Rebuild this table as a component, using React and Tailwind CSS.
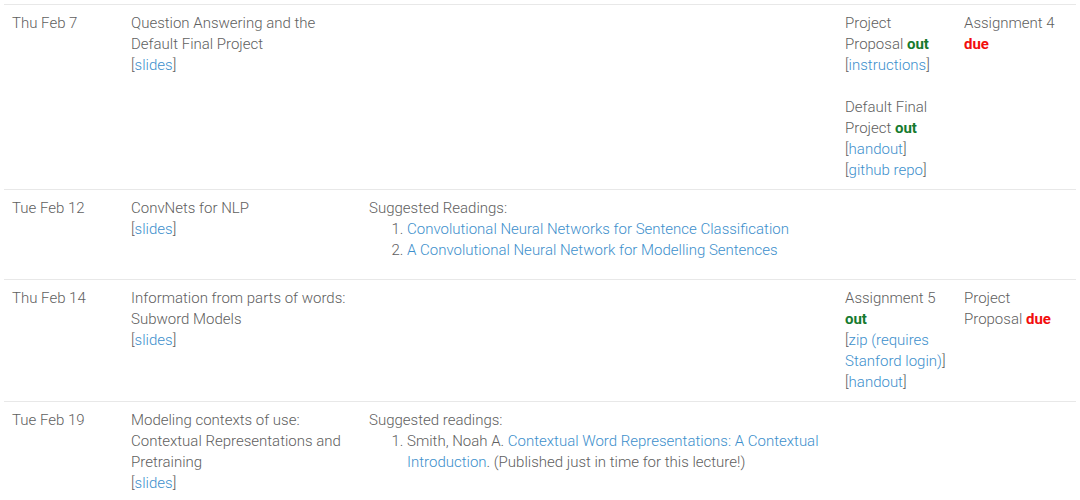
import React from "react";

const A = ({ children }) => <a className="text-[#3d8fcc]">{children}</a>;
const Br = ({ children }) => (
  <>
    [<A>{children}</A>]
  </>
);
const Out = () => <b className="font-bold text-[#167a2e]">out</b>;
const Due = () => <b className="font-bold text-[#f20d0d]">due</b>;

const td = "align-top p-2 border-t border-[#e8e8e8]";

export default function App() {
  return (
    <div className="bg-white w-[1080px] h-[500px] overflow-hidden pt-1 px-1 text-[15px] leading-[21px] font-light text-[#606060]" style={{ fontFamily: "Roboto, 'Liberation Sans', sans-serif" }}>
      <table className="w-[1072px] table-fixed border-collapse">
        <colgroup>
          <col className="w-[119px]" />
          <col className="w-[238px]" />
          <col className="w-[476px]" />
          <col className="w-[119px]" />
          <col className="w-[120px]" />
        </colgroup>
        <tbody>
          <tr>
            <td className={td}>Thu Feb 7</td>
            <td className={td}>
              Question Answering and the Default Final Project
              <br />
              <Br>slides</Br>
            </td>
            <td className={td}></td>
            <td className={td}>
              Project Proposal <Out />
              <br />
              <Br>instructions</Br>
              <br />
              <br />
              Default Final Project <Out />
              <br />
              <Br>handout</Br>
              <br />
              <Br>github repo</Br>
            </td>
            <td className={td}>
              Assignment 4 <Due />
            </td>
          </tr>
          <tr>
            <td className={td}>Tue Feb 12</td>
            <td className={td}>
              ConvNets for NLP
              <br />
              <Br>slides</Br>
            </td>
            <td className={td}>
              Suggested Readings:
              <ol className="list-decimal pl-[38px] mb-[10px]">
                <li>
                  <A>Convolutional Neural Networks for Sentence Classification</A>
                </li>
                <li>
                  <A>A Convolutional Neural Network for Modelling Sentences</A>
                </li>
              </ol>
            </td>
            <td className={td}></td>
            <td className={td}></td>
          </tr>
          <tr>
            <td className={td}>Thu Feb 14</td>
            <td className={td}>
              Information from parts of words: Subword Models
              <br />
              <Br>slides</Br>
            </td>
            <td className={td}></td>
            <td className={td}>
              Assignment 5 <Out />
              <br />
              <Br>zip (requires Stanford login)</Br>
              <br />
              <Br>handout</Br>
            </td>
            <td className={td}>
              Project Proposal <Due />
            </td>
          </tr>
          <tr>
            <td className={td}>Tue Feb 19</td>
            <td className={td}>
              Modeling contexts of use: Contextual Representations and Pretraining
              <br />
              <Br>slides</Br>
            </td>
            <td className={td}>
              Suggested readings:
              <ol className="list-decimal pl-[38px] mb-[10px]">
                <li>
                  Smith, Noah A. <A>Contextual Word Representations: A Contextual Introduction</A>. (Published just in time for this lecture!)
                </li>
              </ol>
            </td>
            <td className={td}></td>
            <td className={td}></td>
          </tr>
        </tbody>
      </table>
    </div>
  );
}
